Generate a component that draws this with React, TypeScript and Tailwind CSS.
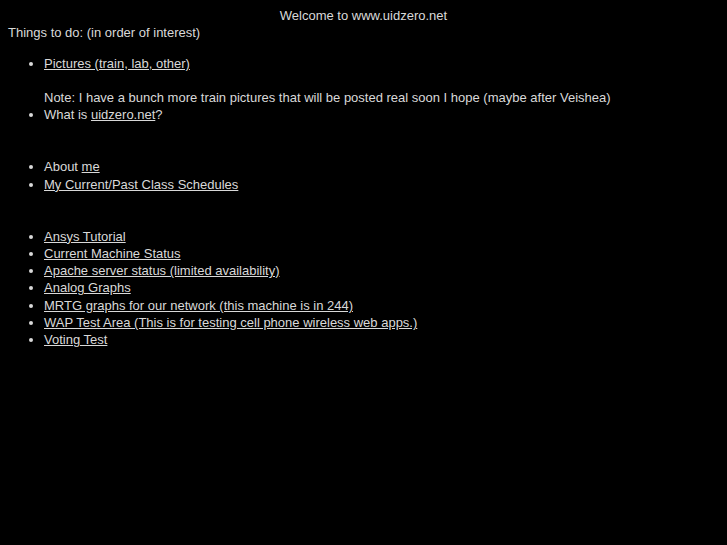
export default function App() {
  const tools = [
    "Ansys Tutorial",
    "Current Machine Status",
    "Apache server status (limited availability)",
    "Analog Graphs",
    "MRTG graphs for our network (this machine is in 244)",
    "WAP Test Area (This is for testing cell phone wireless web apps.)",
    "Voting Test",
  ];

  return (
    <div className="min-h-[545px] bg-black px-2 pt-[7px] pb-2 font-['Liberation_Sans',Arial,sans-serif] text-[13px] leading-[17.3px] text-[#d9d9d9]">
      <p className="text-center">Welcome to www.uidzero.net</p>
      <p>Things to do: (in order of interest)</p>

      <ul className="my-[13px] list-disc pl-9">
        <li>
          <a href="#" className="underline">Pictures (train, lab, other)</a>
          <br />
          <br />
          Note: I have a bunch more train pictures that will be posted real soon I hope (maybe after Veishea)
        </li>
        <li>
          What is <a href="#" className="underline">uidzero.net</a>?
          <br />
          <br />
          <br />
        </li>
        <li>
          About <a href="#" className="underline">me</a>
        </li>
        <li>
          <a href="#" className="underline">My Current/Past Class Schedules</a>
          <br />
          <br />
          <br />
        </li>
        {tools.map((t) => (
          <li key={t}>
            <a href="#" className="underline">{t}</a>
          </li>
        ))}
      </ul>
    </div>
  );
}
